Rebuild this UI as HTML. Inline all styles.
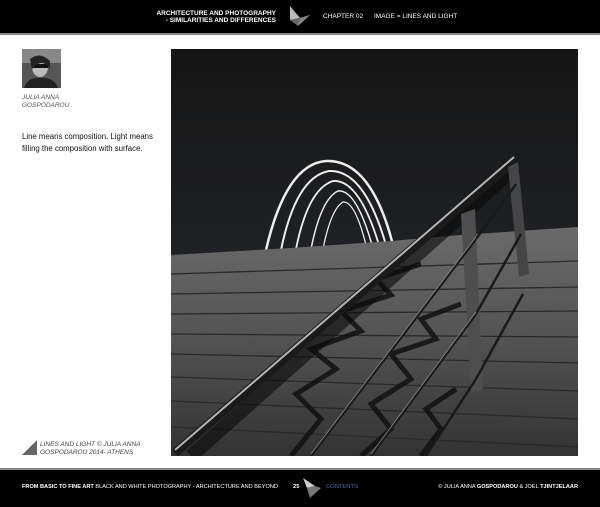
<!DOCTYPE html>
<html><head><meta charset="utf-8"><style>
*{margin:0;padding:0}
body{width:600px;height:505px;background:#fff;position:relative;overflow:hidden;font-family:"Liberation Sans",sans-serif}
.hdr{position:absolute;left:0;top:0;width:600px;height:33px;background:#000;border-bottom:2px solid #888}
.ftr{position:absolute;left:0;top:468px;width:600px;height:37px;background:#000;border-top:2px solid #888}
.t{position:absolute;color:#fff;white-space:nowrap}
</style></head><body>
<div class="hdr">
 <div class="t" style="left:150px;top:10px;width:126px;text-align:right;font-size:6.5px;font-weight:bold;line-height:7px">ARCHITECTURE AND PHOTOGRAPHY<br>- SIMILARITIES AND DIFFERENCES</div>
 <svg style="position:absolute;left:288px;top:5px" width="24" height="22"><polygon points="2,1 12,13 2,15" fill="#bbb"/><polygon points="2,15 12,13 22,10 10,21" fill="#666"/><polygon points="12,13 22,10 10,21" fill="#888"/></svg>
 <div class="t" style="left:323px;top:13px;font-size:6.5px">CHAPTER 02</div>
 <div class="t" style="left:374px;top:13px;font-size:6.5px">IMAGE = LINES AND LIGHT</div>
</div>
<svg style="position:absolute;left:22px;top:49px" width="39" height="39"><rect width="39" height="39" fill="#555"/><rect y="0" width="39" height="14" fill="#888"/><ellipse cx="18" cy="18" rx="8" ry="10" fill="#bbb"/><rect x="10" y="15" width="16" height="4" fill="#111"/><path d="M2 39 Q6 28 18 29 Q32 28 36 39Z" fill="#222"/><path d="M8 10 Q18 2 28 12 L28 20 Q20 8 10 20Z" fill="#222"/></svg>
<div style="position:absolute;left:22px;top:94px;font-size:6.5px;font-style:italic;color:#555;line-height:7.5px">JULIA ANNA<br>GOSPODAROU</div>
<div style="position:absolute;left:22px;top:131px;font-size:7.8px;color:#111;line-height:12px">Line means composition. Light means<br>filling the composition with surface.</div>
<svg style="position:absolute;left:22px;top:440px" width="15" height="15"><polygon points="15,0 15,15 0,15" fill="#666"/></svg>
<div style="position:absolute;left:40px;top:441px;font-size:6.5px;font-style:italic;color:#444;line-height:8px">LINES AND LIGHT © JULIA ANNA<br>GOSPODAROU 2014- ATHENS</div>
<svg style="position:absolute;left:171px;top:49px" width="407" height="407" viewBox="0 0 407 407">
<defs><linearGradient id="sky" x1="0" y1="0" x2="0" y2="1"><stop offset="0" stop-color="#151515"/><stop offset="1" stop-color="#2a2d33"/></linearGradient>
<linearGradient id="st" x1="0" y1="0" x2="0" y2="1"><stop offset="0" stop-color="#6a6a6a"/><stop offset="0.45" stop-color="#555"/><stop offset="1" stop-color="#333"/></linearGradient></defs>
<rect width="407" height="407" fill="url(#sky)"/>
<g fill="none" stroke="#eee" stroke-width="2.5">
<path d="M95 201 Q115 115 155 112 Q200 110 222 196"/>
<path d="M110 201 Q125 128 158 122 Q193 120 215 196" stroke-width="2"/>
<path d="M125 200 Q137 140 162 132 Q188 130 208 196" stroke-width="1.8"/>
<path d="M140 200 Q150 150 167 142 Q185 140 201 196" stroke-width="1.5"/>
<path d="M152 200 Q160 160 172 153 Q184 152 195 196" stroke-width="1.3"/>
</g>
<polygon points="0,206 120,199 220,192 290,186 407,178 407,407 0,407" fill="url(#st)"/>
<g stroke="#2a2a2a" stroke-width="1.3">
<line x1="0" y1="225" x2="407" y2="212"/><line x1="0" y1="245" x2="407" y2="238"/><line x1="0" y1="265" x2="407" y2="262"/><line x1="0" y1="285" x2="407" y2="288"/><line x1="0" y1="305" x2="407" y2="314"/><line x1="0" y1="328" x2="407" y2="342"/><line x1="0" y1="352" x2="407" y2="370"/><line x1="0" y1="378" x2="407" y2="398"/>
</g>
<g fill="none" stroke="#111" stroke-width="5" opacity="0.85">
<path d="M120 407 L150 370 L125 345 L165 320 L140 300 L190 282 L170 262 L220 246 L205 230 L250 215"/>
<path d="M190 407 L220 380 L200 355 L240 330 L220 305 L265 290 L250 270 L290 255"/>
<path d="M250 407 L270 380 L255 360 L285 340"/>
</g>
<path d="M20 407 L345 118" stroke="#0a0a0a" stroke-width="14" opacity="0.6"/>
<path d="M4 404 L345 110" stroke="#1a1a1a" stroke-width="9"/>
<path d="M4 401 L343 108" stroke="#b5b5b5" stroke-width="2"/>
<polygon points="290,165 304,160 312,340 300,343" fill="#4e4e4e"/>
<polygon points="337,118 347,113 358,225 348,228" fill="#454545"/>
<g stroke="#1a1a1a" stroke-width="2.5">
<line x1="140" y1="407" x2="305" y2="190"/><line x1="200" y1="407" x2="305" y2="265"/><line x1="255" y1="407" x2="305" y2="330"/>
<line x1="305" y1="190" x2="345" y2="135"/><line x1="305" y1="265" x2="350" y2="185"/><line x1="305" y1="330" x2="352" y2="245"/>
</g>
<g stroke="#888" stroke-width="0.8"><line x1="140" y1="405" x2="305" y2="188"/><line x1="200" y1="405" x2="305" y2="263"/></g>
</svg>
<div class="ftr">
 <div class="t" style="left:22px;top:14px;font-size:5.6px"><b>FROM BASIC TO FINE ART</b> BLACK AND WHITE PHOTOGRAPHY - ARCHITECTURE AND BEYOND</div>
 <div class="t" style="left:293px;top:14px;font-size:5.8px;font-weight:bold">25</div>
 <svg style="position:absolute;left:303px;top:6px" width="20" height="24"><polygon points="0,2 12,10 4,12" fill="#ccc"/><polygon points="4,12 12,10 18,12 7,22" fill="#777"/></svg>
 <div class="t" style="left:326px;top:14px;font-size:5.8px;color:#4a6cb0">CONTENTS</div>
 <div class="t" style="right:22px;top:14px;font-size:5.6px">© JULIA ANNA <b>GOSPODAROU</b> &amp; JOEL <b>TJINTJELAAR</b></div>
</div>
</body></html>
